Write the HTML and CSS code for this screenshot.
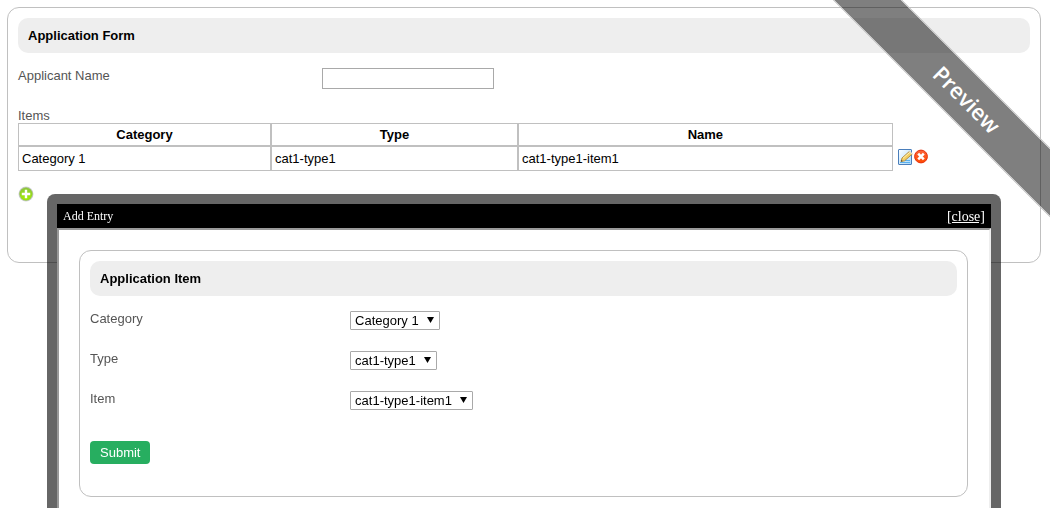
FILE: index.html
```
<!DOCTYPE html>
<html lang="en">
<head>
    <meta charset="UTF-8">
    <meta name="viewport" content="width=device-width, initial-scale=1.0">
    <title>Application Form</title>
    <link rel="stylesheet" href="styles.css">
</head>

<body>

    <form class="form-box" onsubmit="return false;">
        <h2 class="section-title">Application Form</h2>

        <div class="row">
            <label class="row-label" for="applicant_name">Applicant Name</label>
            <input class="text-input" type="text" name="applicant_name" id="applicant_name">
        </div>

        <div class="grid">
            <div class="grid-label" id="items_label">Items</div>
            <table class="grid-table" aria-labelledby="items_label">
                <thead>
                    <tr>
                        <th class="col-category">Category</th>
                        <th class="col-type">Type</th>
                        <th>Name</th>
                        <td class="actions"></td>
                    </tr>
                </thead>
                <tbody>
                    <tr>
                        <td>Category 1</td>
                        <td>cat1-type1</td>
                        <td>cat1-type1-item1</td>
                        <td class="actions">
                            <div class="action-list">
                                <button class="icon-button" type="button" aria-label="Edit">
                                    <svg width="16" height="16" viewBox="0 0 16 16">
                                        <defs>
                                            <linearGradient id="paper" x1="0" y1="0" x2="1" y2="1">
                                                <stop offset="0" stop-color="#fff"/>
                                                <stop offset="1" stop-color="#a8d8f8"/>
                                            </linearGradient>
                                        </defs>
                                        <rect x="1.5" y="0.5" width="13" height="15" rx="0.5" fill="url(#paper)" stroke="#4a7ebb"/>
                                        <path d="M3 13.5h10M8 11.5h5" stroke="#5ab0ee"/>
                                        <path d="M4 12.6l1-3.6 7.4-6.6 2.8 2.7-7.6 6.7z" fill="#f3cf63" stroke="#a87b2a" stroke-width="0.8"/>
                                        <path d="M6 9.3l7-6.1" stroke="#fff1ae"/>
                                        <path d="M12.4 2.4l2.8 2.7" stroke="#e6dfc8" stroke-width="1.4"/>
                                        <path d="M4 12.6l.4-1.7 1.3 1.2z" fill="#333"/>
                                    </svg>
                                </button>
                                <button class="icon-button" type="button" aria-label="Delete">
                                    <svg width="16" height="16" viewBox="0 0 16 16">
                                        <defs>
                                            <linearGradient id="red" x1="0" y1="0" x2="0" y2="1">
                                                <stop offset="0" stop-color="#f9643c"/>
                                                <stop offset="1" stop-color="#ff4a00"/>
                                            </linearGradient>
                                        </defs>
                                        <circle cx="8" cy="7.5" r="6.4" fill="url(#red)" stroke="#e8300a"/>
                                        <path d="M5.2 4.7l5.6 5.6M10.8 4.7l-5.6 5.6" stroke="#fff" stroke-width="2.6"/>
                                    </svg>
                                </button>
                            </div>
                        </td>
                    </tr>
                </tbody>
            </table>
            <button class="icon-button" type="button" aria-label="Add">
                <svg width="16" height="16" viewBox="0 0 16 16">
                    <defs>
                        <linearGradient id="green" x1="0" y1="0" x2="0" y2="1">
                            <stop offset="0" stop-color="#8cc63c"/>
                            <stop offset="1" stop-color="#a4f000"/>
                        </linearGradient>
                    </defs>
                    <circle cx="8" cy="8" r="7.5" fill="#cfcfd8"/>
                    <circle cx="8" cy="8" r="6.3" fill="url(#green)" stroke="#8cbf3a" stroke-width="0.6"/>
                    <path d="M8 3.8v8.4M3.8 8h8.4" stroke="#fff" stroke-width="2.4"/>
                </svg>
            </button>
        </div>
    </form>

    <div class="ribbon-corner">
        <div class="ribbon">Preview</div>
    </div>

    <div class="dialog" role="dialog" aria-labelledby="dialog_title">
        <div class="dialog-bar">
            <span id="dialog_title">Add Entry</span>
            <a class="dialog-close" href="#">[close]</a>
        </div>
        <div class="dialog-body">
            <form class="form-box" onsubmit="return false;">
                <h2 class="section-title">Application Item</h2>

                <div class="row">
                    <label class="row-label" for="category">Category</label>
                    <select class="select" name="category" id="category">
                        <option>Category 1</option>
                    </select>
                </div>

                <div class="row">
                    <label class="row-label" for="type">Type</label>
                    <select class="select" name="type" id="type">
                        <option>cat1-type1</option>
                    </select>
                </div>

                <div class="row">
                    <label class="row-label" for="item">Item</label>
                    <select class="select" name="item" id="item">
                        <option>cat1-type1-item1</option>
                    </select>
                </div>

                <button class="submit" type="submit">Submit</button>
            </form>
        </div>
    </div>

</body>
</html>
```
FILE: styles.css
```
* {
    box-sizing: border-box;
}

html {
    height: 100%;
    overflow: hidden;
}

body {
    font-family: Arial, "Liberation Sans", sans-serif;
    font-size: 13px;
    line-height: 15px;
    background-color: #fff;
    color: #000;
    margin: 7px 9px 0 7px;
}

button,
input,
select {
    font: inherit;
    margin: 0;
}

.form-box {
    padding: 10px 10px 32px;
    border: 1px solid #c0c0c0;
    border-radius: 12px;
}

.section-title {
    margin: 0 0 15px;
    padding: 10px;
    font-size: 13px;
    line-height: 15px;
    background-color: #eee;
    border-radius: 10px;
}

.row {
    display: flex;
    align-items: flex-start;
    height: 40px;
}

.row-label {
    width: 30%;
    color: #555;
}

.text-input {
    width: 172px;
    height: 21px;
    padding: 1px 4px;
    border: 1px solid #a9a9a9;
}

/* Items grid */
.grid {
    padding-bottom: 28px;
}

.grid-label {
    color: #555;
}

.grid-table {
    table-layout: fixed;
    border-collapse: separate;
    border-spacing: 0;
    margin-bottom: 15px;
    width: 90%;
}

.grid-table th,
.grid-table td {
    border: 1px solid #c0c0c0;
    padding: 3px;
    text-align: left;
}

.grid-table th {
    text-align: center;
}

.grid-table td {
    padding: 4px 3px;
}

.grid-table .actions {
    width: 36px;
    border: 0;
    padding: 0 0 0 4px;
}

.grid-table .col-category {
    width: 253px;
}

.grid-table .col-type {
    width: 247px;
}

.action-list {
    display: flex;
    height: 20px;
}

.icon-button {
    display: block;
    width: 16px;
    height: 16px;
    padding: 0;
    border: 0;
    background: none;
    cursor: pointer;
}

.icon-button svg {
    display: block;
}

/* Corner ribbon */
.ribbon-corner {
    position: absolute;
    top: 0;
    right: 0;
    width: 240px;
    height: 240px;
    overflow: hidden;
    pointer-events: none;
}

.ribbon {
    position: absolute;
    top: 75px;
    right: -117px;
    width: 400px;
    border: 1px solid #bbb;
    background-color: rgba(0, 0, 0, 0.5);
    background-clip: padding-box;
    color: #fff;
    font-family: "Open Sans", sans-serif;
    font-size: 22px;
    font-weight: 600;
    line-height: 47px;
    text-align: center;
    transform: rotate(45deg);
}

/* Popup dialog */
.dialog {
    position: fixed;
    top: 194px;
    left: 47px;
    right: 49px;
    border: 10px solid rgba(0, 0, 0, 0.6);
    border-radius: 8px;
    background-color: #fff;
    background-clip: padding-box;
}

.dialog-bar {
    display: flex;
    justify-content: space-between;
    padding: 0 6px;
    background-color: #000;
    color: #fff;
    font-family: "Liberation Serif", "Times New Roman", serif;
    font-size: 12px;
    line-height: 24px;
}

.dialog-close {
    color: #fff;
    font-size: 14px;
    line-height: 26px;
    height: 24px;
}

.dialog-body {
    padding: 20px 21px 40px 20px;
    border: 2px solid #999;
    border-right-color: #eee;
    border-bottom-color: #eee;
}

.select {
    appearance: none;
    height: 19px;
    padding: 0 20px 0 4px;
    border: 1px solid #a9a9a9;
    border-radius: 1px;
    color: #000;
    background: #fff url("data:image/svg+xml,%3Csvg xmlns='http://www.w3.org/2000/svg' width='7' height='6'%3E%3Cpath d='M0 0h7L3.5 6z'/%3E%3C/svg%3E") no-repeat right 5px top 5px;
}

.submit {
    display: block;
    margin-top: 10px;
    padding: 4px 10px;
    border: 0;
    border-radius: 4px;
    background-color: #27ae60;
    color: #fff;
    cursor: pointer;
}
```
